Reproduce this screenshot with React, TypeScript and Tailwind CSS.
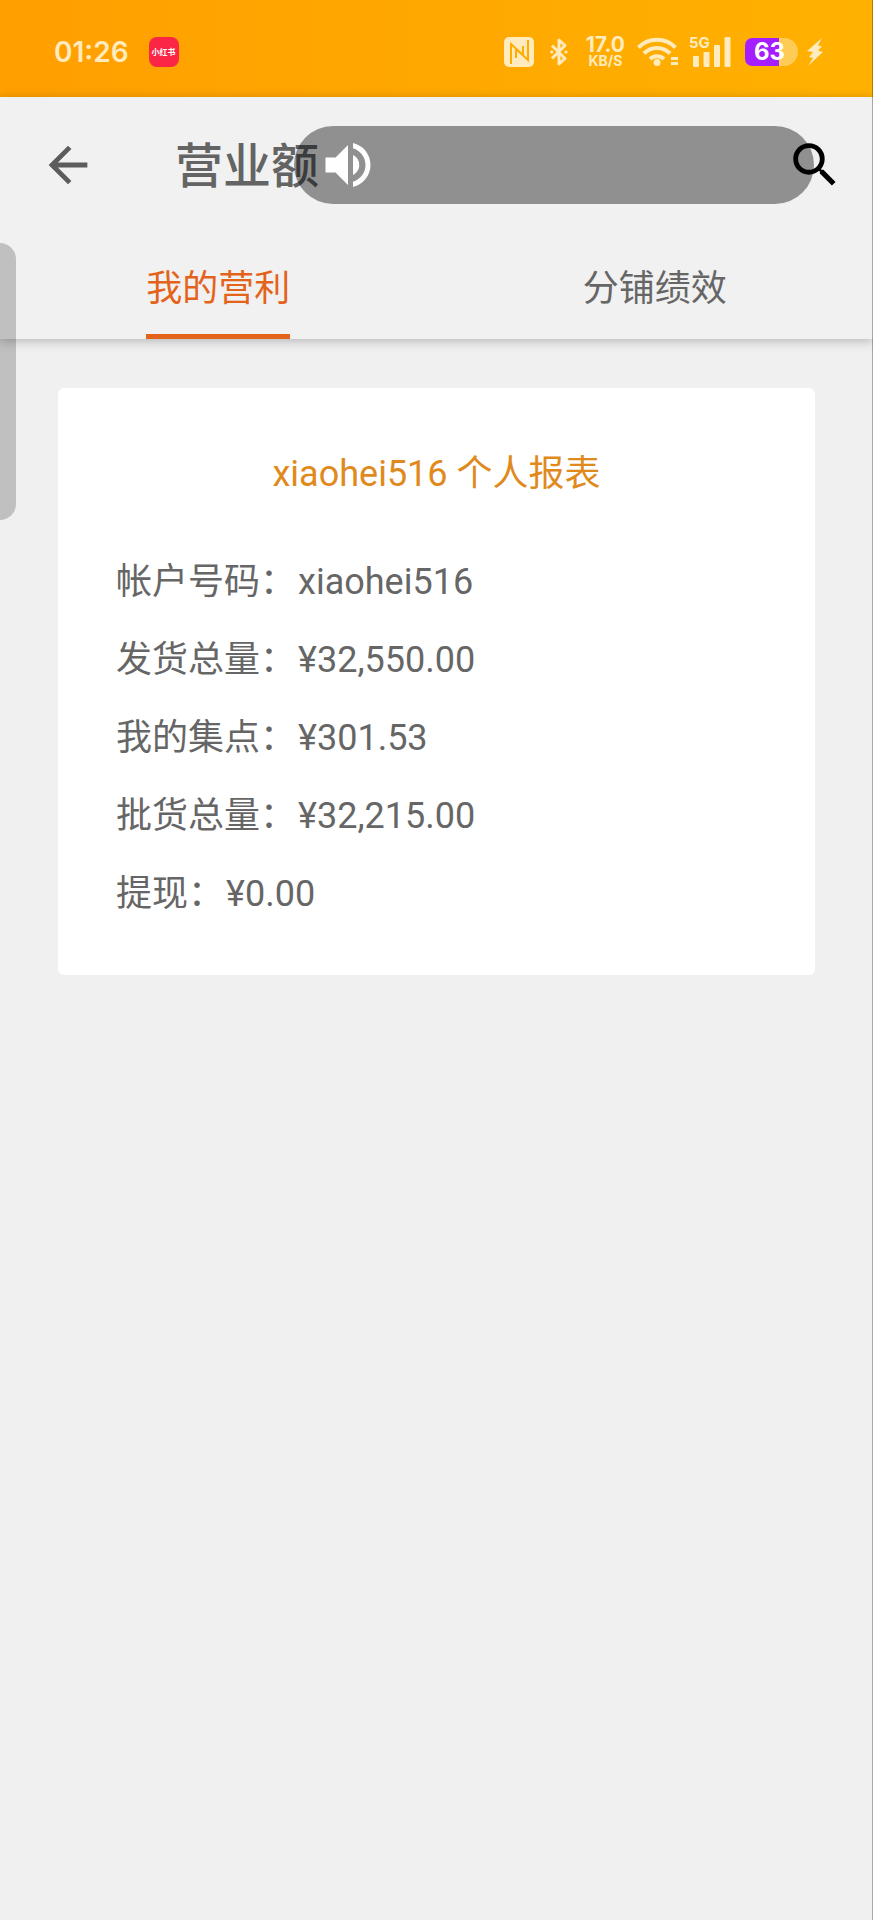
import React, { useState } from "react";
import { MdArrowBack, MdSearch, MdVolumeUp } from "react-icons/md";

const TABS = ["我的营利", "分铺绩效"];

const REPORT = [
  { label: "帐户号码", value: "xiaohei516" },
  { label: "发货总量", value: "¥32,550.00" },
  { label: "我的集点", value: "¥301.53" },
  { label: "批货总量", value: "¥32,215.00" },
  { label: "提现", value: "¥0.00" },
];

function NfcIcon() {
  return (
    <svg viewBox="0 0 30 30" className="w-[30px] h-[30px]" fill="none">
      <rect width="30" height="30" rx="5" fill="#ffebbd" />
      <path d="M7 27V7l12 11V9M24 3v20L12 12v9" stroke="#ffad00" strokeWidth="2" />
    </svg>
  );
}

function BluetoothIcon() {
  return (
    <svg viewBox="0 0 18 30" className="w-[18px] h-[30px]" fill="none">
      <path
        d="M2 8.500l13 13-6 5.500V3l6 5.500-13 13"
        stroke="#ffebbd"
        strokeWidth="3"
        strokeLinejoin="round"
      />
      <circle cx="1.800" cy="15" r="1.600" fill="#ffebbd" />
      <circle cx="16" cy="15" r="1.600" fill="#ffebbd" />
    </svg>
  );
}

function WifiIcon() {
  return (
    <svg viewBox="0 0 42 30" className="w-[42px] h-[30px]" fill="none">
      <path d="M1.500 10.500a26 26 0 0 1 37 0" stroke="#ffebbd" strokeWidth="4" />
      <path d="M7 16.500a18 18 0 0 1 26 0" stroke="#ffebbd" strokeWidth="4" />
      <path d="M13 22a10 10 0 0 1 14 0" stroke="#ffebbd" strokeWidth="4" />
      <circle cx="20" cy="25.500" r="3.500" fill="#ffebbd" />
      <path d="M34 21.500h7M34 26.500h7" stroke="#ffebbd" strokeWidth="3" />
    </svg>
  );
}

function SignalIcon() {
  return (
    <svg viewBox="0 0 38 30" className="w-[38px] h-[30px]" fill="#ffebbd">
      <rect x="0" y="19" width="6" height="11" rx="1" />
      <rect x="10.500" y="15" width="6" height="15" rx="1" />
      <rect x="21" y="8" width="6" height="22" rx="1" />
      <rect x="31.500" y="0" width="6" height="30" rx="1" />
    </svg>
  );
}

function BoltIcon() {
  return (
    <svg viewBox="0 0 18 28" className="w-[18px] h-[28px]" fill="#ffebbd">
      <path d="M16 0L1 13l6 1-4 5 4 1-5 8 15-14-5-1.500 4-4-4-1z" />
    </svg>
  );
}

function StatusBar() {
  return (
    <div className="flex h-[97px] items-center bg-linear-to-r from-[#ff9f00] to-[#ffb100] pt-1.5 pr-[49px] pl-[54px] font-['Inter','Noto_Sans_CJK_SC',sans-serif] text-[#ffebbd]">
      <span className="text-[28px] leading-none font-semibold">01:26</span>
      <span className="ml-5 flex size-[30px] items-center justify-center rounded-lg bg-[#fb2546] text-[8px] leading-none font-bold text-white">
        小红书
      </span>
      <div className="ml-auto flex items-center">
        <NfcIcon />
        <span className="ml-4">
          <BluetoothIcon />
        </span>
        <div className="ml-[18px] flex flex-col items-center">
          <span className="text-[21px] leading-[18px] font-bold">17.0</span>
          <span className="text-[14px] leading-[14px] font-bold">KB/S</span>
        </div>
        <span className="ml-3">
          <WifiIcon />
        </span>
        <div className="relative ml-[14px]">
          <SignalIcon />
          <span className="absolute -top-0.5 -left-1 text-[15px] leading-none font-bold">5G</span>
        </div>
        <div className="relative ml-[14px] flex h-[28px] w-[53px] items-center overflow-hidden rounded-lg rounded-r-2xl bg-[#ffcb57] pl-[9px]">
          <span className="absolute inset-y-0 left-0 w-[34px] bg-[#a51eff]" />
          <span className="relative text-[24px] leading-none font-bold text-white">63</span>
        </div>
        <span className="ml-2">
          <BoltIcon />
        </span>
      </div>
    </div>
  );
}

export default function App() {
  const [activeTab, setActiveTab] = useState(TABS[0]);

  return (
    <div className="relative min-h-screen bg-[#f0f0f0] font-['Roboto','Noto_Sans_CJK_SC',sans-serif] text-[#666666]">
      <StatusBar />

      <header className="relative bg-[#f1f1f1] shadow-[0_2px_10px_rgba(0,0,0,0.25)]">
        <div className="relative flex h-[136px] items-center pr-[29px] pl-[39px]">
          <button aria-label="返回" className="text-[#5c5c5c]">
            <MdArrowBack size={58} />
          </button>
          <h1 className="ml-[78px] pt-1 text-[48px] leading-none font-medium text-[#646464]">营业额</h1>

          {/* Volume overlay */}
          <div className="absolute inset-y-[29px] right-[59px] left-[294px] flex items-center rounded-full bg-black/40 pl-6 text-white">
            <MdVolumeUp size={60} />
          </div>

          <button aria-label="搜索" className="relative ml-auto text-black">
            <MdSearch size={58} />
          </button>
        </div>

        <nav className="flex">
          {TABS.map((t) => (
            <button
              key={t}
              onClick={() => setActiveTab(t)}
              className="flex flex-1 justify-center text-[36px]"
            >
              <span
                className={`border-b-[5px] pt-3 leading-[89px] ${
                  activeTab === t ? "border-[#e4631b] text-[#e4631b]" : "border-transparent"
                }`}
              >
                {t}
              </span>
            </button>
          ))}
        </nav>
      </header>

      {/* Edge panel handle */}
      <div className="absolute top-[243px] left-0 h-[277px] w-4 rounded-r-2xl bg-black/20" />

      <main className="px-[58px] pt-[49px]">
        <section className="rounded-md bg-white px-[58px] pt-[59px] pb-[42px] text-[36px]">
          <h2 className="text-center leading-[54px] text-[#e08a1e]">xiaohei516 个人报表</h2>
          <ul className="mt-[42px]">
            {REPORT.map((r) => (
              <li key={r.label} className="flex gap-0.5 leading-[78px]">
                <span>{r.label}：</span>
                <span>{r.value}</span>
              </li>
            ))}
          </ul>
        </section>
      </main>

      {/* Screen edge */}
      <div className="absolute inset-y-0 right-0 w-px bg-black/30" />
    </div>
  );
}
